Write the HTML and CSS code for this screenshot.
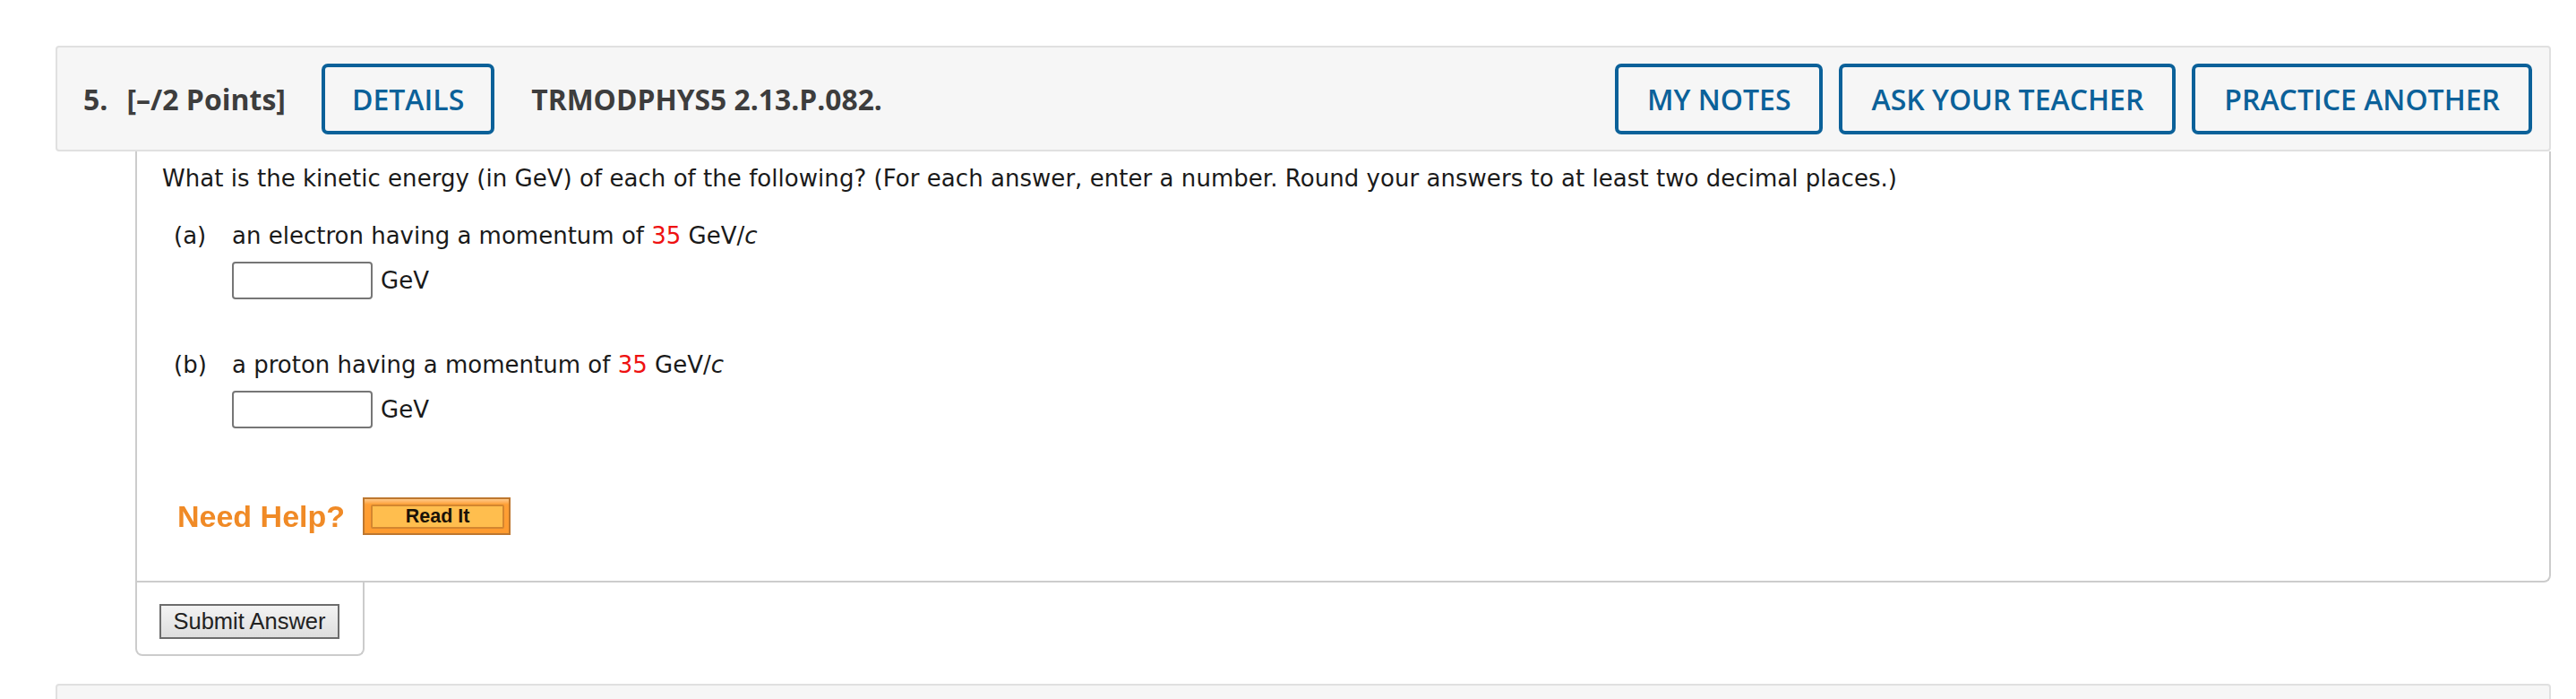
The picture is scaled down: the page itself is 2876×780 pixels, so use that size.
FILE: index.html
```html
<!DOCTYPE html>
<html lang="en">
<head>
<meta charset="utf-8">
<title>Question 5</title>
<link rel="stylesheet" href="styles.css">
</head>
<body>
<div class="page">
  <div class="question">
    <div class="qhead">
      <span class="qnum">5.</span>
      <span class="qpts">[–/2 Points]</span>
      <button class="btn btn-details">DETAILS</button>
      <span class="qref">TRMODPHYS5 2.13.P.082.</span>
      <div class="spacer"></div>
      <div class="actions">
        <button class="btn">MY NOTES</button>
        <button class="btn">ASK YOUR TEACHER</button>
        <button class="btn">PRACTICE ANOTHER</button>
      </div>
    </div>
    <div class="qbody">
      <p class="prompt">What is the kinetic energy (in GeV) of each of the following? (For each answer, enter a number. Round your answers to at least two decimal places.)</p>
      <div class="part">
        <div class="part-line"><span class="plabel">(a)</span><span>an electron having a momentum of <span class="red">35</span> GeV/<i>c</i></span></div>
        <div class="answer-row"><input class="ans" type="text"><span class="unit">GeV</span></div>
      </div>
      <div class="part part-b">
        <div class="part-line"><span class="plabel">(b)</span><span>a proton having a momentum of <span class="red">35</span> GeV/<i>c</i></span></div>
        <div class="answer-row"><input class="ans" type="text"><span class="unit">GeV</span></div>
      </div>
      <div class="help">
        <span class="need">Need Help?</span>
        <button class="readit"><span class="readit-inner">Read It</span></button>
      </div>
    </div>
    <div class="submit-tab">
      <button class="submit">Submit Answer</button>
    </div>
  </div>
  <div class="question next">
    <div class="qhead"></div>
  </div>
</div>
</body>
</html>
```

FILE: styles.css
```css
html, body {
  margin: 0;
  padding: 0;
  background: #ffffff;
}

body {
  font-family: "DejaVu Sans", Verdana, sans-serif;
  color: #1a1a1a;
}

.page {
  padding: 51px 28px 0 62px;
}

.qhead {
  box-sizing: border-box;
  height: 118px;
  background: #f6f6f6;
  border: 2px solid #e0e0e0;
  border-radius: 4px;
  display: flex;
  align-items: center;
  padding: 0 19px 0 29px;
  font-family: "Open Sans", "DejaVu Sans", sans-serif;
  font-weight: 700;
  font-size: 32px;
  color: #3d3d3d;
}

.qnum {
  margin-right: 21px;
}

.qpts {
  margin-right: 40px;
}

.qref {
  margin-left: 41px;
  font-size: 31.8px;
}

.spacer {
  flex: 1;
}

.actions {
  display: flex;
  gap: 18px;
}

.btn {
  box-sizing: border-box;
  height: 79px;
  border: 4px solid #0b6199;
  border-radius: 7px;
  background: transparent;
  color: #0b6199;
  font-family: "Open Sans", "DejaVu Sans", sans-serif;
  font-weight: 600;
  font-size: 32px;
  padding: 0 32px;
  cursor: pointer;
}

.btn-details {
  padding: 0 30px;
}

.qbody {
  margin-left: 89px;
  border: 2px solid #cccccc;
  border-top: none;
  border-radius: 0 0 8px 0;
  padding: 12px 28px 51px;
  font-size: 26px;
  line-height: 36px;
}

.prompt {
  margin: 0;
  letter-spacing: 0.04px;
}

.part {
  margin-top: 28px;
}

.part-b {
  margin-top: 55px;
}

.part-line {
  display: flex;
  padding-left: 13px;
}

.plabel {
  width: 65px;
}

.red {
  color: #ee1111;
}

.answer-row {
  display: flex;
  align-items: center;
  margin-top: 11px;
  padding-left: 78px;
}

.ans {
  box-sizing: border-box;
  width: 157px;
  height: 42px;
  border: 2px solid #767676;
  border-radius: 4px;
  margin: 0 9px 0 0;
  padding: 0 6px;
  background: #fff;
  font-size: 24px;
}

.help {
  display: flex;
  align-items: center;
  margin-top: 77px;
  padding-left: 17px;
}

.need {
  font-family: "Liberation Sans", Arial, sans-serif;
  font-weight: 700;
  font-size: 34px;
  color: #f08a26;
  margin-right: 20px;
  filter: blur(0.4px);
}

.readit {
  box-sizing: border-box;
  width: 165px;
  height: 42px;
  padding: 6px 5px 5px 7px;
  border: 2px solid #bd772f;
  background: linear-gradient(#ffc98a 0, #ff9f35 6px, #ff9b2f 100%);
  display: flex;
  cursor: pointer;
}

.readit-inner {
  flex: 1;
  display: flex;
  align-items: center;
  justify-content: center;
  border: 2px solid #d4862f;
  border-radius: 2px;
  background: #ffbe4e;
  font-family: "Liberation Sans", Arial, sans-serif;
  font-weight: 700;
  font-size: 21.5px;
  color: #1a1208;
}

.submit-tab {
  display: inline-block;
  margin-left: 89px;
  border: 2px solid #cccccc;
  border-top: none;
  border-radius: 0 0 8px 8px;
  padding: 24px 26px 17px 25px;
}

.submit {
  box-sizing: border-box;
  width: 201px;
  height: 39px;
  border: 2px solid #6d6d6d;
  background: linear-gradient(#f3f3f3, #dedede);
  font-family: "Liberation Sans", Arial, sans-serif;
  font-size: 25.5px;
  color: #222;
  padding: 0;
  display: block;
}

.next {
  margin-top: 31px;
}
```
